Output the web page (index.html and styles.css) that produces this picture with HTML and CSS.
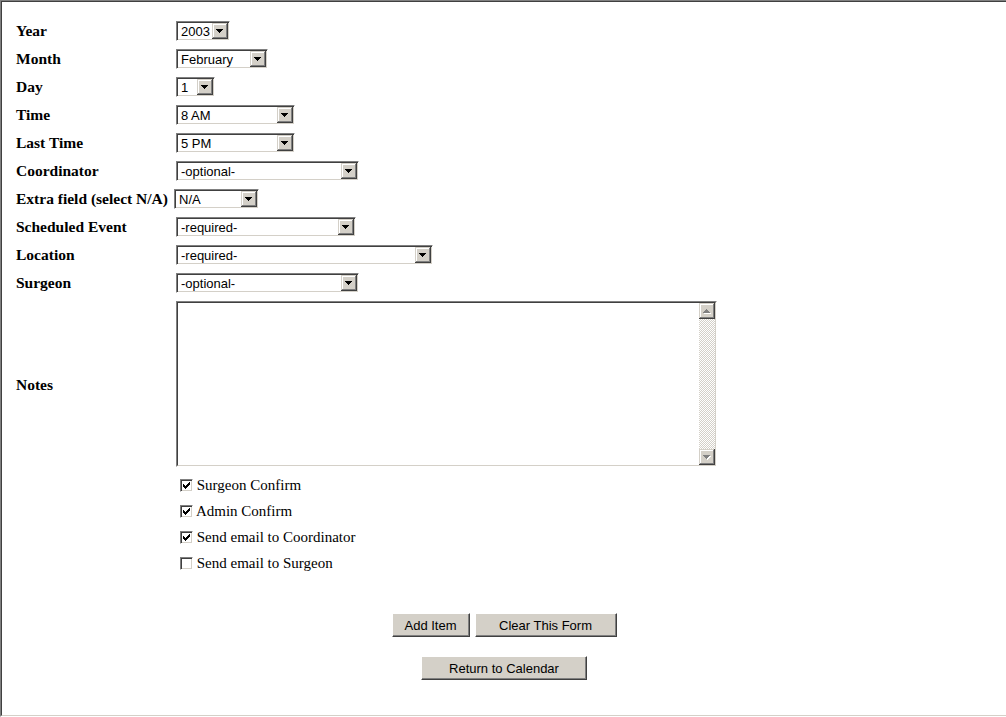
FILE: index.html
```html
<!DOCTYPE html>
<html lang="en">
<head>
    <meta charset="UTF-8">
    <meta name="viewport" content="width=device-width, initial-scale=1.0">
    <title>Add Calendar Item</title>
    <link rel="stylesheet" href="styles.css">
</head>
<body>
<div class="frame">
    <div class="page">
        <form class="entry">

            <!-- date / time / people -->
            <div class="fields">
                <label class="lbl">Year</label>
                <div class="ctl"><select class="w-year"><option>2003</option><option>2004</option></select></div>

                <label class="lbl">Month</label>
                <div class="ctl"><select class="w-month"><option>January</option><option selected>February</option><option>March</option></select></div>

                <label class="lbl">Day</label>
                <div class="ctl"><select class="w-day"><option>1</option><option>2</option><option>3</option></select></div>

                <label class="lbl">Time</label>
                <div class="ctl"><select class="w-time"><option>8 AM</option><option>9 AM</option></select></div>

                <label class="lbl">Last Time</label>
                <div class="ctl"><select class="w-time"><option>5 PM</option><option>6 PM</option></select></div>

                <label class="lbl">Coordinator</label>
                <div class="ctl"><select class="w-person"><option>-optional-</option></select></div>

                <label class="lbl">Extra field (select N/A)</label>
                <div class="ctl ctl-tight"><select class="w-extra"><option>N/A</option></select></div>

                <label class="lbl">Scheduled Event</label>
                <div class="ctl"><select class="w-event"><option>-required-</option></select></div>

                <label class="lbl">Location</label>
                <div class="ctl"><select class="w-location"><option>-required-</option></select></div>

                <label class="lbl">Surgeon</label>
                <div class="ctl"><select class="w-person"><option>-optional-</option></select></div>

                <label class="lbl">Notes</label>
                <div class="ctl">
                    <div class="notes-box">
                        <div class="notes-inner">
                            <textarea class="notes"></textarea>
                            <div class="sbar">
                                <span class="sb-btn sb-up"></span>
                                <span class="sb-track"></span>
                                <span class="sb-btn sb-down"></span>
                            </div>
                        </div>
                    </div>
                </div>

                <div class="checks">
                    <label class="chk"><input type="checkbox" checked> Surgeon Confirm</label>
                    <label class="chk"><input type="checkbox" checked> Admin Confirm</label>
                    <label class="chk"><input type="checkbox" checked> Send email to Coordinator</label>
                    <label class="chk"><input type="checkbox"> Send email to Surgeon</label>
                </div>
            </div>

            <!-- buttons -->
            <div class="actions">
                <div class="btn-row">
                    <button type="submit" class="btn w-add">Add Item</button>
                    <button type="reset" class="btn w-clear">Clear This Form</button>
                </div>
                <div class="btn-row">
                    <button type="button" class="btn w-return">Return to Calendar</button>
                </div>
            </div>
        </form>
    </div>
</div>
</body>
</html>
```

FILE: styles.css
```css
* {
    margin: 0;
    padding: 0;
    box-sizing: border-box;
}

html, body {
    background-color: #fff;
    color: #000;
    font-family: "Liberation Serif", "Times New Roman", serif;
    overflow: hidden;
}

/* sunken window frame */
.frame {
    height: 717px;
    border-top: 1px solid #808080;
    border-left: 1px solid #808080;
    border-bottom: 1px solid #fff;
}

.page {
    height: 100%;
    border-top: 1px solid #404040;
    border-left: 1px solid #404040;
    border-bottom: 1px solid #d4d0c8;
}

.fields {
    display: grid;
    grid-template-columns: 160px 1fr;
    grid-auto-rows: minmax(28px, auto);
    align-items: center;
    padding: 15px 0 0 14px;
}

.lbl {
    font-weight: bold;
    font-size: 15.5px;
    white-space: nowrap;
}

.ctl {
    display: flex;
    align-items: center;
}

.ctl-tight {
    margin-left: -2px;
}

select {
    appearance: none;
    -webkit-appearance: none;
    height: 20px;
    border: 1px solid;
    border-color: #808080 #fff #fff #808080;
    border-radius: 0;
    box-shadow: inset 1px 1px #404040, inset -1px -1px #d4d0c8;
    font-family: "Liberation Sans", Arial, sans-serif;
    font-size: 13px;
    color: #000;
    padding: 0 18px 0 4px;
    outline: none;
    background: #fff url("data:image/svg+xml;utf8,<svg xmlns='http://www.w3.org/2000/svg' width='16' height='16' shape-rendering='crispEdges'><rect width='16' height='16' fill='%23404040'/><rect width='15' height='15' fill='%23d4d0c8'/><rect x='1' y='1' width='14' height='14' fill='%23808080'/><rect x='1' y='1' width='13' height='13' fill='%23fff'/><rect x='2' y='2' width='12' height='12' fill='%23d4d0c8'/><rect x='4' y='6' width='7' height='1' fill='%23000'/><rect x='5' y='7' width='5' height='1' fill='%23000'/><rect x='6' y='8' width='3' height='1' fill='%23000'/><rect x='7' y='9' width='1' height='1' fill='%23000'/></svg>") no-repeat right 1px top 1px;
}

.w-year { width: 54px; }
.w-month { width: 92px; }
.w-day { width: 39px; }
.w-time { width: 119px; }
.w-person { width: 183px; }
.w-extra { width: 85px; }
.w-event { width: 180px; }
.w-location { width: 257px; }

/* notes box with its scroll bar */
.notes-box {
    width: 541px;
    height: 166px;
    margin: 4px 0 5px;
    border: 1px solid;
    border-color: #808080 #fff #fff #808080;
}

.notes-inner {
    display: flex;
    height: 100%;
    border: 1px solid;
    border-color: #404040 #d4d0c8 #d4d0c8 #404040;
}

.notes {
    flex: 1;
    border: none;
    resize: none;
    overflow: hidden;
    outline: none;
    padding: 2px;
    font-family: "Liberation Sans", Arial, sans-serif;
    font-size: 13px;
}

.sbar {
    width: 16px;
    display: flex;
    flex-direction: column;
}

.sb-track {
    flex: 1;
    background: repeating-conic-gradient(#d4d0c8 0 25%, #fff 0 50%) 0 0 / 2px 2px;
}

.sb-btn {
    display: block;
    height: 16px;
}

.sb-up {
    background: url("data:image/svg+xml;utf8,<svg xmlns='http://www.w3.org/2000/svg' width='16' height='16' shape-rendering='crispEdges'><rect width='16' height='16' fill='%23404040'/><rect width='15' height='15' fill='%23d4d0c8'/><rect x='1' y='1' width='14' height='14' fill='%23808080'/><rect x='1' y='1' width='13' height='13' fill='%23fff'/><rect x='2' y='2' width='12' height='12' fill='%23d4d0c8'/><g fill='%23fff'><rect x='8' y='7' width='1' height='1'/><rect x='7' y='8' width='3' height='1'/><rect x='6' y='9' width='5' height='1'/><rect x='5' y='10' width='7' height='1'/></g><g fill='%23808080'><rect x='7' y='6' width='1' height='1'/><rect x='6' y='7' width='3' height='1'/><rect x='5' y='8' width='5' height='1'/><rect x='4' y='9' width='7' height='1'/></g></svg>") no-repeat;
}

.sb-down {
    background: url("data:image/svg+xml;utf8,<svg xmlns='http://www.w3.org/2000/svg' width='16' height='16' shape-rendering='crispEdges'><rect width='16' height='16' fill='%23404040'/><rect width='15' height='15' fill='%23d4d0c8'/><rect x='1' y='1' width='14' height='14' fill='%23808080'/><rect x='1' y='1' width='13' height='13' fill='%23fff'/><rect x='2' y='2' width='12' height='12' fill='%23d4d0c8'/><g fill='%23fff'><rect x='5' y='7' width='7' height='1'/><rect x='6' y='8' width='5' height='1'/><rect x='7' y='9' width='3' height='1'/><rect x='8' y='10' width='1' height='1'/></g><g fill='%23808080'><rect x='4' y='6' width='7' height='1'/><rect x='5' y='7' width='5' height='1'/><rect x='6' y='8' width='3' height='1'/><rect x='7' y='9' width='1' height='1'/></g></svg>") no-repeat;
}

/* checkboxes */
.checks {
    grid-column: 2;
    padding-left: 4px;
}

.chk {
    display: flex;
    align-items: center;
    height: 26px;
    font-size: 15px;
    white-space: pre;
}

.chk input {
    appearance: none;
    -webkit-appearance: none;
    width: 13px;
    height: 13px;
    border: 1px solid;
    border-color: #808080 #fff #fff #808080;
    box-shadow: inset 1px 1px #404040, inset -1px -1px #d4d0c8;
    background-color: #fff;
}

.chk input:checked {
    background: #fff url("data:image/svg+xml;utf8,<svg xmlns='http://www.w3.org/2000/svg' width='7' height='7' shape-rendering='crispEdges'><g fill='%23000'><rect x='6' y='0' width='1' height='1'/><rect x='5' y='1' width='2' height='1'/><rect x='0' y='2' width='1' height='1'/><rect x='4' y='2' width='3' height='1'/><rect x='0' y='3' width='2' height='1'/><rect x='3' y='3' width='3' height='1'/><rect x='0' y='4' width='5' height='1'/><rect x='1' y='5' width='3' height='1'/><rect x='2' y='6' width='1' height='1'/></g></svg>") no-repeat 2px 2px;
}

/* buttons */
.actions {
    margin-top: 37px;
}

.btn-row {
    display: flex;
    justify-content: center;
    gap: 5px;
}

.btn-row + .btn-row {
    margin-top: 19px;
}

.btn {
    height: 24px;
    background-color: #d4d0c8;
    border: 1px solid;
    border-color: #fff #404040 #404040 #fff;
    box-shadow: inset -1px -1px #808080;
    border-radius: 0;
    font-family: "Liberation Sans", Arial, sans-serif;
    font-size: 13px;
    color: #000;
    cursor: pointer;
}

.w-add { width: 78px; }
.w-clear { width: 142px; }
.w-return { width: 166px; }
```
